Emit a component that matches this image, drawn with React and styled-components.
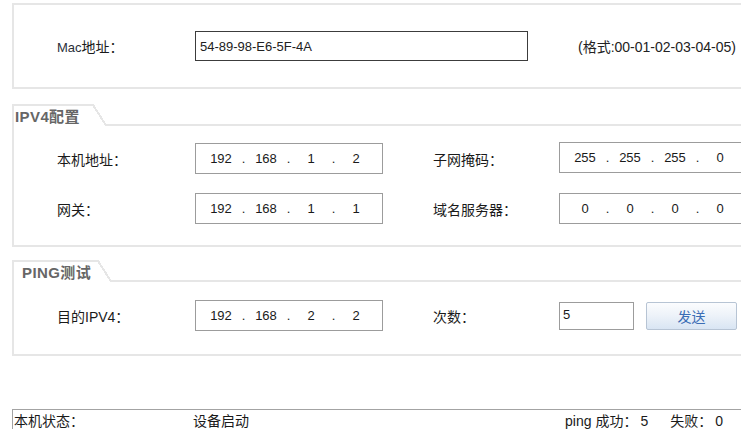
import styled, { createGlobalStyle } from 'styled-components';

const GlobalStyle = createGlobalStyle`
  html, body {
    margin: 0;
    padding: 0;
    background: #fff;
    overflow: hidden;
  }

  body {
    font-family: "Liberation Sans", "Noto Sans CJK SC", sans-serif;
    font-size: 14px;
    color: #1a1a1a;
  }
`;

const Page = styled.div`
  width: 741px;
  height: 440px;
  overflow: hidden;
  box-sizing: border-box;
  padding: 3px 0 0 12px;
  display: flex;
  flex-direction: column;
`;

const MacPanel = styled.div`
  height: 86px;
  box-sizing: border-box;
  border: 2px solid #e6e6e6;
  border-right: none;
  padding-left: 43px;
  display: flex;
  align-items: center;
  flex-shrink: 0;
`;

const Section = styled.section`
  margin-top: ${props => props.$gap}px;
  flex-shrink: 0;
`;

const Header = styled.div`
  display: flex;
  align-items: flex-end;
  height: 22px;
`;

const Tab = styled.div`
  position: relative;
  width: ${props => props.$width}px;
  height: 22px;
  box-sizing: border-box;
  border-top: 2px solid #e6e6e6;
  border-left: 2px solid #e6e6e6;
  padding-left: ${props => props.$indent}px;
  font-size: 15px;
  font-weight: 700;
  letter-spacing: 0.4px;
  color: #666;
  line-height: 21px;
  white-space: nowrap;

  &::after {
    content: '';
    position: absolute;
    top: -2px;
    right: -14px;
    width: 14px;
    height: 22px;
    background: linear-gradient(
      to top right,
      transparent calc(50% - 1.5px),
      #e6e6e6 calc(50% - 1.5px),
      #e6e6e6 calc(50% + 0.5px),
      transparent calc(50% + 0.5px)
    );
  }
`;

const Rule = styled.div`
  flex: 1;
  margin-left: 14px;
  border-bottom: 2px solid #e6e6e6;
`;

const Body = styled.div`
  height: ${props => props.$height}px;
  box-sizing: border-box;
  border-left: 2px solid #e6e6e6;
  border-bottom: 2px solid #e6e6e6;
  padding: ${props => props.$top}px 0 0 43px;
  display: flex;
  flex-direction: column;
  gap: 19px;
`;

const Row = styled.div`
  display: flex;
  align-items: center;
  flex-shrink: 0;
`;

const Label = styled.div`
  width: ${props => props.$width}px;
  margin-left: ${props => props.$offset || 0}px;
  flex-shrink: 0;
  font-size: 14px;
  color: #1a1a1a;
  white-space: nowrap;
`;

const Small = styled.span`
  font-size: 13px;
  color: #2b2f3a;
`;

const MacInput = styled.div`
  width: 333px;
  height: 30px;
  box-sizing: border-box;
  border: 1px solid #3c3c3c;
  padding-left: 4px;
  display: flex;
  align-items: center;
  flex-shrink: 0;
  font-size: 13px;
  color: #222;
`;

const Hint = styled.div`
  margin-left: 50px;
  font-size: 14px;
  color: #222;
  white-space: nowrap;
`;

const IpBox = styled.div`
  width: 188px;
  height: 31px;
  margin-top: ${props => props.$lift ? -3 : 0}px;
  box-sizing: border-box;
  border: 1px solid #9c9c9c;
  padding-left: 11px;
  display: flex;
  align-items: center;
  flex-shrink: 0;
  font-size: 13px;
  color: #1a1a1a;
  background: #fff;
`;

const Seg = styled.span`
  width: 28px;
  text-align: center;
`;

const Dot = styled.span`
  width: 17px;
  text-align: center;
`;

const CountInput = styled.div`
  width: 75px;
  height: 28px;
  box-sizing: border-box;
  border: 1px solid #9c9c9c;
  padding: 4px 0 0 3px;
  flex-shrink: 0;
  font-size: 13px;
  line-height: 15px;
  color: #1a1a1a;
`;

const SendButton = styled.button`
  width: 91px;
  height: 28px;
  margin-left: 12px;
  flex-shrink: 0;
  border: 1px solid #b7c4d4;
  border-radius: 2px;
  background: linear-gradient(to bottom, #fbfcfe 0%, #eef3f9 45%, #d9e5f3 100%);
  font-family: inherit;
  font-size: 14px;
  color: #3b6db5;
  padding: 0;
`;

const StatusBar = styled.div`
  margin-top: 53px;
  height: 20px;
  box-sizing: border-box;
  border-top: 1px solid #a3a3a3;
  border-left: 1px solid #a3a3a3;
  display: flex;
  align-items: center;
  padding: 0 18px 0 1px;
  font-size: 14px;
  color: #1a1a1a;
  white-space: nowrap;
  flex-shrink: 0;
`;

const StatusKey = styled.span`
  width: 179px;
`;

const StatusStats = styled.div`
  margin-left: auto;
  display: flex;
  gap: 22px;
`;

const Value = styled.span`
  margin-left: 3px;
`;

function IpField({ value, lift }) {
  const parts = value.split('.');
  return (
    <IpBox $lift={lift}>
      {parts.map((part, i) => (
        <span key={i} style={{ display: 'contents' }}>
          {i > 0 && <Dot>.</Dot>}
          <Seg>{part}</Seg>
        </span>
      ))}
    </IpBox>
  );
}

export default function App() {
  return (
    <>
      <GlobalStyle />
      <Page>
        <MacPanel>
          <Label $width={138}>
            <Small>Mac</Small>地址：
          </Label>
          <MacInput>54-89-98-E6-5F-4A</MacInput>
          <Hint>(格式:00-01-02-03-04-05)</Hint>
        </MacPanel>

        <Section $gap={15}>
          <Header>
            <Tab $width={81} $indent={1}>IPV4配置</Tab>
            <Rule />
          </Header>
          <Body $height={121} $top={17}>
            <Row>
              <Label $width={138}>本机地址：</Label>
              <IpField value="192.168.1.2" />
              <Label $width={126} $offset={50}>子网掩码：</Label>
              <IpField value="255.255.255.0" lift />
            </Row>
            <Row>
              <Label $width={138}>网关：</Label>
              <IpField value="192.168.1.1" />
              <Label $width={126} $offset={50}>域名服务器：</Label>
              <IpField value="0.0.0.0" />
            </Row>
          </Body>
        </Section>

        <Section $gap={13}>
          <Header>
            <Tab $width={86} $indent={8}>PING测试</Tab>
            <Rule />
          </Header>
          <Body $height={74} $top={18}>
            <Row>
              <Label $width={138}>目的IPV4：</Label>
              <IpField value="192.168.2.2" />
              <Label $width={126} $offset={50}>次数：</Label>
              <CountInput>5</CountInput>
              <SendButton>发送</SendButton>
            </Row>
          </Body>
        </Section>

        <StatusBar>
          <StatusKey>本机状态：</StatusKey>
          <span>设备启动</span>
          <StatusStats>
            <span>ping 成功：<Value>5</Value></span>
            <span>失败：<Value>0</Value></span>
          </StatusStats>
        </StatusBar>
      </Page>
    </>
  );
}
